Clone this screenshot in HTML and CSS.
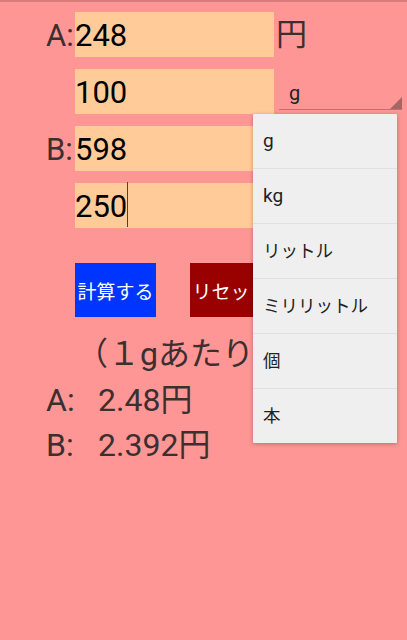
FILE: index.html
```html
<!DOCTYPE html>
<html lang="ja">
<head>
<meta charset="utf-8">
<title>単価計算</title>
<link rel="stylesheet" href="styles.css">
</head>
<body>
<div class="screen">
  <div class="form">
    <div class="label">A:</div>
    <div class="field">248</div>
    <div class="suffix">円</div>

    <div class="label"></div>
    <div class="field">100</div>
    <div class="spinner">
      <span class="spinner-text">g</span>
      <span class="spinner-arrow"></span>
    </div>

    <div class="label">B:</div>
    <div class="field">598</div>
    <div class="suffix"></div>

    <div class="label"></div>
    <div class="field">250<span class="caret"></span></div>
    <div class="suffix"></div>
  </div>

  <div class="buttons">
    <div class="btn btn-calc">計算する</div>
    <div class="btn btn-reset">リセット</div>
  </div>

  <div class="per-unit">（１gあたり）</div>
  <div class="result"><span class="res-label">A:</span><span>2.48円</span></div>
  <div class="result"><span class="res-label">B:</span><span>2.392円</span></div>

  <ul class="dropdown">
    <li class="item">g</li>
    <li class="item">kg</li>
    <li class="item jp">リットル</li>
    <li class="item jp">ミリリットル</li>
    <li class="item jp">個</li>
    <li class="item jp">本</li>
  </ul>
</div>
</body>
</html>
```

FILE: styles.css
```css
html, body {
  margin: 0;
  padding: 0;
}

body {
  background: #ff9696;
  font-family: Roboto, "Noto Sans CJK JP", sans-serif;
  color: #3b2f2f;
}

.screen {
  position: relative;
  width: 407px;
  height: 640px;
  box-sizing: border-box;
  padding: 12px 0 0 46px;
  box-shadow: inset 0 2px 0 #d97c7c;
  overflow: hidden;
}

.form {
  display: grid;
  grid-template-columns: 29px 199px 1fr;
  grid-auto-rows: 45px;
  row-gap: 12px;
}

.label {
  font-size: 31px;
  line-height: 47px;
}

.field {
  background: #ffcc99;
  color: #000;
  font-size: 31px;
  line-height: 47px;
  height: 45px;
  white-space: nowrap;
}

.caret {
  display: inline-block;
  width: 1px;
  height: 45px;
  background: #444;
  vertical-align: top;
  margin-top: -1px;
}

.suffix {
  font-size: 31px;
  line-height: 45px;
  padding-left: 2px;
  color: #3b2f2f;
}

.spinner {
  position: relative;
  align-self: end;
  margin: 0 5px 4px 5px;
  width: 123px;
  height: 36px;
  padding-top: 4px;
  border-bottom: 1px solid #c07272;
  box-sizing: border-box;
}

.spinner-text {
  display: block;
  padding-left: 10px;
  font-size: 20px;
  line-height: 30px;
  color: #222;
}

.spinner-arrow {
  position: absolute;
  right: 0;
  bottom: 0;
  width: 0;
  height: 0;
  border-style: solid;
  border-width: 0 0 12px 12px;
  border-color: transparent transparent #a86565 transparent;
}

.buttons {
  display: flex;
  gap: 34px;
  margin: 35px 0 0 29px;
}

.btn {
  width: 81px;
  height: 54px;
  display: flex;
  align-items: center;
  justify-content: center;
  color: #fff;
  font-size: 19px;
  white-space: nowrap;
  overflow: hidden;
}

.btn-calc {
  background: #0035ff;
}

.btn-reset {
  background: #990000;
}

.per-unit {
  margin: 13px 0 0 30px;
  width: 177px;
  overflow: hidden;
  font-size: 32px;
  line-height: 48px;
  white-space: nowrap;
}

.result {
  display: flex;
  font-size: 32px;
  line-height: 45px;
  white-space: nowrap;
}

.res-label {
  width: 52px;
}

.dropdown {
  position: absolute;
  left: 253px;
  top: 114px;
  width: 144px;
  margin: 0;
  padding: 0;
  list-style: none;
  background: #efefef;
  box-shadow: 0 1px 4px rgba(0, 0, 0, 0.28);
  border-radius: 1px;
}

.item {
  height: 54px;
  line-height: 54px;
  padding-left: 10px;
  font-size: 19px;
  color: #222;
  border-top: 1px solid #e0e0e0;
}

.item:first-child {
  border-top: none;
}

.item.jp {
  font-size: 17.5px;
}
```
